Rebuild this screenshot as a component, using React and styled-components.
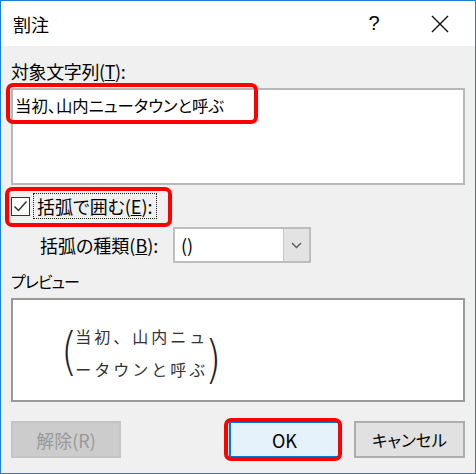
import React from "react";
import styled, { createGlobalStyle } from "styled-components";

const Global = createGlobalStyle`
  html, body { margin: 0; padding: 0; background: #f0f0f0; }
  * { box-sizing: border-box; }
`;

const UI = `"Noto Sans CJK JP", "Noto Sans", sans-serif`;

const Window = styled.div`
  width: 476px;
  height: 474px;
  border: 1px solid #1c7fd6;
  background: #f0f0f0;
  display: flex;
  flex-direction: column;
  font-family: ${UI};
  font-feature-settings: "palt";
  color: #000;
  overflow: hidden;
`;

const TitleBar = styled.div`
  height: 45px;
  background: #fff;
  display: flex;
  align-items: center;
  padding-left: 12px;
  flex-shrink: 0;
`;

const Title = styled.div`
  font-size: 18px;
  line-height: 24px;
  flex: 1;
  color: #000;
`;

const TitleButton = styled.div`
  width: ${(p) => p.$w}px;
  height: 45px;
  display: flex;
  align-items: center;
  justify-content: center;
  font-family: "Liberation Sans", sans-serif;
  font-size: 20px;
  color: #000;
`;

const Body = styled.div`
  flex: 1;
  padding: 0 10px;
  display: flex;
  flex-direction: column;
`;

const FieldLabel = styled.div`
  margin-top: ${(p) => p.$mt}px;
  font-size: ${(p) => p.$fs || 18}px;
  letter-spacing: ${(p) => p.$ls || 0}px;
  line-height: 24px;
  height: 24px;
  white-space: nowrap;
`;

const Holder = styled.div`
  position: relative;
  margin-top: ${(p) => p.$mt || 0}px;
`;

const Highlight = styled.div`
  position: absolute;
  left: ${(p) => p.$l}px;
  top: ${(p) => p.$t}px;
  width: ${(p) => p.$w}px;
  height: ${(p) => p.$h}px;
  border: 4px solid #ff0000;
  border-radius: 7px;
  pointer-events: none;
`;

const TextBox = styled.div`
  height: 97px;
  background: #fff;
  border: 2px solid #b8b8b8;
  padding: 3px 2px;
  font-size: 16.4px;
  line-height: 24px;
  white-space: nowrap;
`;

const CheckRow = styled.div`
  height: 26px;
  display: flex;
  align-items: center;
`;

const CheckBox = styled.div`
  width: 19px;
  height: 19px;
  border: 1px solid #333;
  background: #fff;
  display: flex;
  align-items: center;
  justify-content: center;
`;

const FocusLabel = styled.div`
  margin-left: 3px;
  height: 26px;
  border: 1px dotted #222;
  padding: 0 3px;
  font-size: 18px;
  line-height: 24px;
  white-space: nowrap;
`;

const ComboRow = styled.div`
  margin-top: 8px;
  height: 36px;
  display: flex;
  align-items: center;
`;

const ComboLabel = styled.div`
  margin-left: 29px;
  width: 133px;
  font-size: 18px;
  line-height: 24px;
  white-space: nowrap;
`;

const Combo = styled.div`
  width: 138px;
  height: 36px;
  border: 2px solid #bdbdbd;
  background: #fff;
  display: flex;
`;

const ComboValue = styled.div`
  flex: 1;
  padding-left: 6px;
  font-size: 18px;
  line-height: 32px;
`;

const ComboButton = styled.div`
  width: 26px;
  background: #e3e3e3;
  border-left: 1px solid #c4c4c4;
  display: flex;
  align-items: center;
  justify-content: center;
`;

const PreviewBox = styled.div`
  margin-top: 5px;
  height: 104px;
  border: 2px solid #9a9a9a;
  background: #fff;
  padding: 26px 0 0 46px;
  display: flex;
  align-items: flex-start;
`;

const Paren = styled.div`
  font-family: "DejaVu Sans", "Liberation Serif", serif;
  font-weight: 200;
  font-size: 52px;
  line-height: 46px;
  height: 46px;
  color: #222;
  transform: scaleX(0.8);
  margin-top: ${(p) => p.$mt}px;
  margin-left: ${(p) => p.$ml || 0}px;
  margin-right: ${(p) => p.$mr || 0}px;
`;

const PreviewLines = styled.div`
  display: flex;
  flex-direction: column;
  gap: 13px;
`;

const PreviewLine = styled.div`
  font-family: "Noto Sans CJK JP", sans-serif;
  font-weight: 400;
  font-feature-settings: normal;
  font-size: 16px;
  line-height: 20px;
  letter-spacing: 3px;
  color: #333;
  white-space: nowrap;
`;

const ButtonRow = styled.div`
  margin-top: 19px;
  height: 37px;
  display: flex;
  align-items: stretch;
`;

const Button = styled.div`
  width: ${(p) => p.$w}px;
  height: 37px;
  display: flex;
  align-items: center;
  justify-content: center;
  font-size: ${(p) => p.$fs || 18}px;
  border: 2px solid ${(p) => (p.$variant === "default" ? "#0078d7" : p.$variant === "disabled" ? "#c4c4c4" : "#adadad")};
  background: ${(p) => (p.$variant === "default" ? "#e5f1fb" : p.$variant === "disabled" ? "#cccccc" : "#e1e1e1")};
  color: ${(p) => (p.$variant === "disabled" ? "#9a9a9a" : "#000")};
`;

const Spacer = styled.div`
  flex: 1;
`;

const Gap = styled.div`
  width: ${(p) => p.$w}px;
`;

export default function App() {
  return (
    <>
      <Global />
      <Window>
        <TitleBar>
          <Title>割注</Title>
          <TitleButton $w={62}>?</TitleButton>
          <TitleButton $w={70}>
            <svg width="18" height="18" viewBox="0 0 18 18">
              <path d="M1 1 L17 17 M17 1 L1 17" stroke="#111" strokeWidth="1.4" fill="none" />
            </svg>
          </TitleButton>
        </TitleBar>
        <Body>
          <FieldLabel $mt={13} $ls={-0.4}>
            対象文字列(<u>T</u>):
          </FieldLabel>
          <Holder $mt={5}>
            <TextBox>当初、山内ニュータウンと呼ぶ</TextBox>
            <Highlight $l={-5} $t={-5} $w={252} $h={41} />
          </Holder>
          <Holder $mt={8}>
            <CheckRow>
              <CheckBox>
                <svg width="15" height="13" viewBox="0 0 15 13">
                  <path d="M1.5 6.5 L5.5 10.5 L13.5 1.5" stroke="#333" strokeWidth="1.5" fill="none" />
                </svg>
              </CheckBox>
              <FocusLabel>
                括弧で囲む(<u>E</u>):
              </FocusLabel>
            </CheckRow>
            <Highlight $l={-6} $t={-6} $w={167} $h={40} />
          </Holder>
          <ComboRow>
            <ComboLabel>
              括弧の種類(<u>B</u>):
            </ComboLabel>
            <Combo>
              <ComboValue>()</ComboValue>
              <ComboButton>
                <svg width="11" height="7" viewBox="0 0 11 7">
                  <path d="M1 1 L5.5 5.5 L10 1" stroke="#555" strokeWidth="1.3" fill="none" />
                </svg>
              </ComboButton>
            </Combo>
          </ComboRow>
          <FieldLabel $mt={6} $fs={16} $ls={-1}>プレビュー</FieldLabel>
          <PreviewBox>
            <Paren $mt={2} $mr={-4}>(</Paren>
            <PreviewLines>
              <PreviewLine>当初、山内ニュ</PreviewLine>
              <PreviewLine>ータウンと呼ぶ</PreviewLine>
            </PreviewLines>
            <Paren $mt={10} $ml={-5}>)</Paren>
          </PreviewBox>
          <ButtonRow>
            <Button $w={110} $variant="disabled">解除(R)</Button>
            <Spacer />
            <Holder>
              <Button $w={111} $variant="default">OK</Button>
              <Highlight $l={-5} $t={-3} $w={118} $h={43} />
            </Holder>
            <Gap $w={14} />
            <Button $w={111} $fs={16.5}>キャンセル</Button>
          </ButtonRow>
        </Body>
      </Window>
    </>
  );
}
